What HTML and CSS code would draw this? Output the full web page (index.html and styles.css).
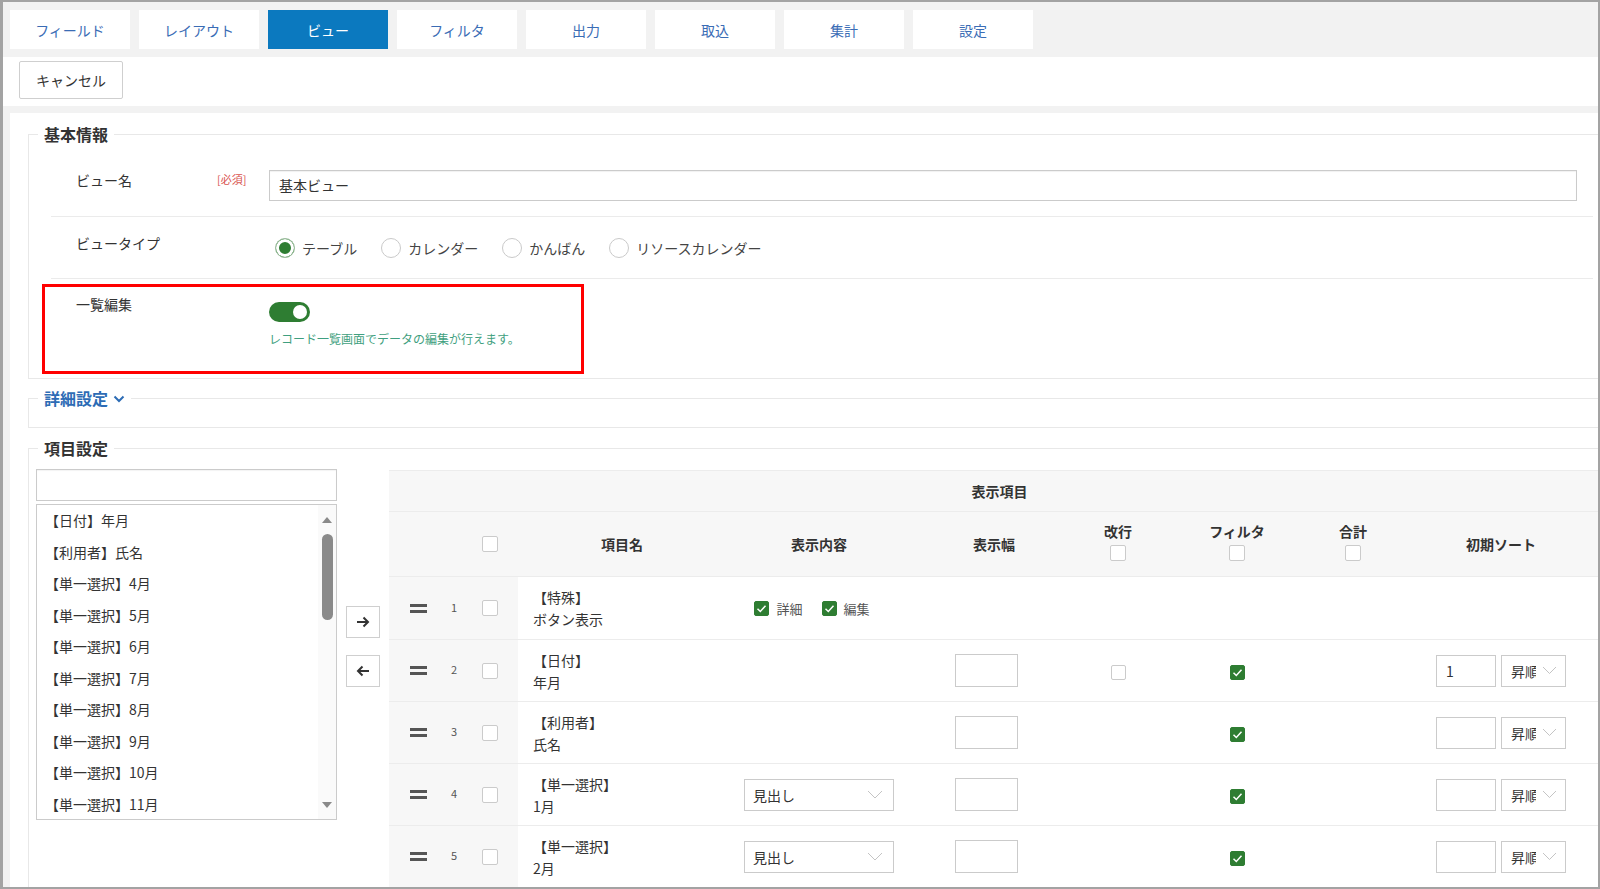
FILE: index.html
```html
<!DOCTYPE html>
<html lang="ja">
<head>
<meta charset="utf-8">
<title>ビュー設定</title>
<link rel="stylesheet" href="styles.css">
</head>
<body>
<div class="frame">
  <nav class="tabs">
    <a class="tab">フィールド</a>
    <a class="tab">レイアウト</a>
    <a class="tab active">ビュー</a>
    <a class="tab">フィルタ</a>
    <a class="tab">出力</a>
    <a class="tab">取込</a>
    <a class="tab">集計</a>
    <a class="tab">設定</a>
  </nav>
  <div class="toolbar"><button class="btn">キャンセル</button></div>
  <main class="panel">
    <fieldset class="fs fs-basic">
      <legend class="lg">基本情報</legend>
      <div class="frow frow-name">
        <div class="flabel">ビュー名</div>
        <div class="freq">[必須]</div>
        <div class="fctl"><div class="text-input">基本ビュー</div></div>
      </div>
      <div class="frow frow-type">
        <div class="flabel">ビュータイプ</div>
        <div class="freq"></div>
        <div class="fctl radios">
          <span class="radio"><span class="rdot on"></span>テーブル</span>
          <span class="radio"><span class="rdot"></span>カレンダー</span>
          <span class="radio"><span class="rdot"></span>かんばん</span>
          <span class="radio"><span class="rdot"></span>リソースカレンダー</span>
        </div>
      </div>
      <div class="frow frow-edit">
        <div class="flabel">一覧編集</div>
        <div class="freq"></div>
        <div class="fctl">
          <span class="toggle"><span class="knob"></span></span>
          <p class="help">レコード一覧画面でデータの編集が行えます。</p>
        </div>
        <div class="mark"></div>
      </div>
    </fieldset>

    <fieldset class="fs fs-detail">
      <legend class="lg lg-link">詳細設定<svg class="chev" width="12" height="8" viewBox="0 0 12 8"><path d="M1.5 1.5 6 6l4.5-4.5" fill="none" stroke="#2d6cb5" stroke-width="2"/></svg></legend>
    </fieldset>

    <fieldset class="fs fs-items">
      <legend class="lg">項目設定</legend>
      <div class="items-body">
        <div class="picker">
          <div class="search"></div>
          <div class="listbox">
            <ul class="list">
              <li>【日付】年月</li>
              <li>【利用者】氏名</li>
              <li>【単一選択】4月</li>
              <li>【単一選択】5月</li>
              <li>【単一選択】6月</li>
              <li>【単一選択】7月</li>
              <li>【単一選択】8月</li>
              <li>【単一選択】9月</li>
              <li>【単一選択】10月</li>
              <li>【単一選択】11月</li>
            </ul>
            <div class="sbar">
              <span class="tri-up"></span>
              <span class="thumb"></span>
              <span class="sbar-fill"></span>
              <span class="tri-down"></span>
            </div>
          </div>
        </div>
        <div class="movers">
          <button class="mv"><svg width="16" height="16" viewBox="0 0 16 16"><path d="M2 8h11M8.5 3.5 13 8l-4.5 4.5" fill="none" stroke="#333" stroke-width="2"/></svg></button>
          <button class="mv"><svg width="16" height="16" viewBox="0 0 16 16"><path d="M14 8H3M7.5 3.5 3 8l4.5 4.5" fill="none" stroke="#333" stroke-width="2"/></svg></button>
        </div>
        <table class="tbl">
          <colgroup>
            <col class="c-ctrl"><col class="c-name"><col class="c-disp"><col class="c-width"><col class="c-br"><col class="c-filter"><col class="c-sum"><col class="c-sort">
          </colgroup>
          <thead>
            <tr class="h1"><th colspan="8">表示項目</th></tr>
            <tr class="h2">
              <th><div class="ctrlbox"><span class="handle ghost"></span><span class="num"></span><span class="cb"></span></div></th>
              <th>項目名</th>
              <th>表示内容</th>
              <th>表示幅</th>
              <th><div class="stack">改行<span class="cb"></span></div></th>
              <th><div class="stack">フィルタ<span class="cb"></span></div></th>
              <th><div class="stack">合計<span class="cb"></span></div></th>
              <th>初期ソート</th>
            </tr>
          </thead>
          <tbody>
            <tr class="r1">
              <td class="ctrl"><div class="ctrlbox"><span class="handle"></span><span class="num">1</span><span class="cb"></span></div></td>
              <td class="name">【特殊】<br>ボタン表示</td>
              <td class="mid"><div class="opts"><span class="opt"><span class="cb sm on"><svg width="13" height="13" viewBox="0 0 13 13"><path d="M2.5 6.8 5.3 9.5 10.5 3.8" fill="none" stroke="#fff" stroke-width="1.5"/></svg></span>詳細</span><span class="opt"><span class="cb sm on"><svg width="13" height="13" viewBox="0 0 13 13"><path d="M2.5 6.8 5.3 9.5 10.5 3.8" fill="none" stroke="#fff" stroke-width="1.5"/></svg></span>編集</span></div></td>
              <td></td><td></td><td></td><td></td><td></td>
            </tr>
            <tr>
              <td class="ctrl"><div class="ctrlbox"><span class="handle"></span><span class="num">2</span><span class="cb"></span></div></td>
              <td class="name">【日付】<br>年月</td>
              <td></td>
              <td class="mid"><div class="winput"></div></td>
              <td class="mid"><span class="cb sm"></span></td>
              <td class="mid"><span class="cb sm on"><svg width="13" height="13" viewBox="0 0 13 13"><path d="M2.5 6.8 5.3 9.5 10.5 3.8" fill="none" stroke="#fff" stroke-width="1.5"/></svg></span></td>
              <td></td>
              <td class="mid"><div class="sortbox"><div class="sinput">1</div><div class="ssel"><span class="ssel-t">昇順</span><svg width="15" height="9" viewBox="0 0 15 9"><path d="M1 1l6.5 6.5L14 1" fill="none" stroke="#c4c4c4" stroke-width="1"/></svg></div></div></td>
            </tr>
            <tr>
              <td class="ctrl"><div class="ctrlbox"><span class="handle"></span><span class="num">3</span><span class="cb"></span></div></td>
              <td class="name">【利用者】<br>氏名</td>
              <td></td>
              <td class="mid"><div class="winput"></div></td>
              <td></td>
              <td class="mid"><span class="cb sm on"><svg width="13" height="13" viewBox="0 0 13 13"><path d="M2.5 6.8 5.3 9.5 10.5 3.8" fill="none" stroke="#fff" stroke-width="1.5"/></svg></span></td>
              <td></td>
              <td class="mid"><div class="sortbox"><div class="sinput"></div><div class="ssel"><span class="ssel-t">昇順</span><svg width="15" height="9" viewBox="0 0 15 9"><path d="M1 1l6.5 6.5L14 1" fill="none" stroke="#c4c4c4" stroke-width="1"/></svg></div></div></td>
            </tr>
            <tr>
              <td class="ctrl"><div class="ctrlbox"><span class="handle"></span><span class="num">4</span><span class="cb"></span></div></td>
              <td class="name">【単一選択】<br>1月</td>
              <td class="mid"><div class="dsel"><span>見出し</span><svg width="16" height="9" viewBox="0 0 16 9"><path d="M1 1l7 7 7-7" fill="none" stroke="#c4c4c4" stroke-width="1"/></svg></div></td>
              <td class="mid"><div class="winput"></div></td>
              <td></td>
              <td class="mid"><span class="cb sm on"><svg width="13" height="13" viewBox="0 0 13 13"><path d="M2.5 6.8 5.3 9.5 10.5 3.8" fill="none" stroke="#fff" stroke-width="1.5"/></svg></span></td>
              <td></td>
              <td class="mid"><div class="sortbox"><div class="sinput"></div><div class="ssel"><span class="ssel-t">昇順</span><svg width="15" height="9" viewBox="0 0 15 9"><path d="M1 1l6.5 6.5L14 1" fill="none" stroke="#c4c4c4" stroke-width="1"/></svg></div></div></td>
            </tr>
            <tr>
              <td class="ctrl"><div class="ctrlbox"><span class="handle"></span><span class="num">5</span><span class="cb"></span></div></td>
              <td class="name">【単一選択】<br>2月</td>
              <td class="mid"><div class="dsel"><span>見出し</span><svg width="16" height="9" viewBox="0 0 16 9"><path d="M1 1l7 7 7-7" fill="none" stroke="#c4c4c4" stroke-width="1"/></svg></div></td>
              <td class="mid"><div class="winput"></div></td>
              <td></td>
              <td class="mid"><span class="cb sm on"><svg width="13" height="13" viewBox="0 0 13 13"><path d="M2.5 6.8 5.3 9.5 10.5 3.8" fill="none" stroke="#fff" stroke-width="1.5"/></svg></span></td>
              <td></td>
              <td class="mid"><div class="sortbox"><div class="sinput"></div><div class="ssel"><span class="ssel-t">昇順</span><svg width="15" height="9" viewBox="0 0 15 9"><path d="M1 1l6.5 6.5L14 1" fill="none" stroke="#c4c4c4" stroke-width="1"/></svg></div></div></td>
            </tr>
          </tbody>
        </table>
      </div>
    </fieldset>
  </main>
</div>
</body>
</html>
```

FILE: styles.css
```css
* { box-sizing: border-box; }
html, body { margin: 0; padding: 0; }
body {
  font-family: "Noto Sans CJK JP", "Noto Sans", sans-serif;
  font-size: 14px;
  color: #333;
  background: #fff;
}

.frame {
  width: 1600px;
  height: 889px;
  border: 2px solid #a3a3a3;
  border-left-width: 3px;
  background: #f2f2f2;
  overflow: hidden;
  display: flex;
  flex-direction: column;
}

/* tabs */
.tabs {
  display: flex;
  gap: 9px;
  padding: 8px 0 8px 7px;
  flex: none;
}
.tab {
  width: 120px;
  height: 39px;
  background: #fff;
  color: #3a6cb5;
  display: flex;
  align-items: center;
  justify-content: center;
  font-size: 14px;
  line-height: 1;
}
.tab.active { background: #0b79bf; color: #fff; }

/* toolbar */
.toolbar {
  background: #fff;
  padding: 4px 0 7px 16px;
  flex: none;
}
.btn {
  width: 104px;
  height: 38px;
  border: 1px solid #cfcfcf;
  border-radius: 2px;
  background: #fff;
  color: #333;
  font-family: inherit;
  font-size: 14px;
  padding: 0;
}

/* panel */
.panel {
  flex: 1;
  background: #fff;
  margin: 7px 0 0 7px;
  padding: 11px 0 0 18px;
}
.fs {
  margin: 0 -6px 0 0;
  padding: 0 0 0 9px;
  border: 1px solid #e8e8e8;
  min-width: 0;
}
.lg {
  padding: 0 6px;
  font-size: 16px;
  font-weight: bold;
  line-height: 20px;
  color: #333;
}
.lg-link { color: #2d6cb5; display: flex; align-items: center; }
.chev { margin-left: 5px; margin-top: 2px; }

/* basic rows */
.frow {
  display: grid;
  grid-template-columns: 141px 52px 1fr;
  align-items: start;
  margin: 0 10px 0 13px;
  padding: 0 16px 0 25px;
  border-bottom: 1px solid #ebebeb;
}
.flabel { line-height: 20px; font-size: 14px; color: #333; }
.freq { line-height: 18px; font-size: 11px; color: #d9534f; }
.frow-name { padding-top: 26px; padding-bottom: 15px; }
.text-input {
  height: 31px;
  border: 1px solid #cbcbcb;
  box-shadow: inset 0 1px 1px rgba(0,0,0,0.06);
  padding: 0 9px;
  line-height: 29px;
  font-size: 14px;
  color: #333;
}
.frow-type { padding-top: 16px; padding-bottom: 20px; }
.radios {
  display: flex;
  gap: 24px;
  margin: 5px 0 0 6px;
}
.radio {
  display: flex;
  align-items: center;
  gap: 7px;
  height: 20px;
  line-height: 20px;
  font-size: 14px;
  color: #444;
}
.rdot {
  width: 20px;
  height: 20px;
  border-radius: 50%;
  border: 1px solid #cacaca;
  background: #fff;
  flex: none;
}
.rdot.on {
  border-color: #9fbfa1;
  background: #2e7d32;
  box-shadow: inset 0 0 0 3px #fff;
}
.frow-edit {
  position: relative;
  border-bottom: none;
  padding-top: 15px;
  padding-bottom: 30px;
}
.toggle {
  display: flex;
  justify-content: flex-end;
  align-items: center;
  width: 41px;
  height: 20px;
  margin-top: 8px;
  border-radius: 10px;
  background: #2e7d32;
  padding: 0 3px;
}
.knob { width: 14px; height: 14px; border-radius: 50%; background: #fff; }
.help {
  margin: 8px 0 0;
  line-height: 18px;
  font-size: 12px;
  color: #3f9f80;
}
.mark {
  position: absolute;
  left: -9px;
  top: 5px;
  width: 542px;
  height: 90px;
  border: 3px solid #ff0000;
}

/* detail */
.fs-detail { margin-top: 9px; padding-bottom: 19px; }

/* items */
.fs-items { margin-top: 10px; padding-top: 11px; }
.items-body {
  display: flex;
  align-items: flex-start;
  gap: 9px;
  margin-left: -2px;
}
.picker { width: 301px; flex: none; }
.search {
  height: 32px;
  border: 1px solid #cbcbcb;
  box-shadow: inset 0 1px 1px rgba(0,0,0,0.05);
}
.listbox {
  margin-top: 3px;
  height: 316px;
  border: 1px solid #cbcbcb;
  display: flex;
  overflow: hidden;
}
.list {
  list-style: none;
  margin: 0;
  padding: 0 0 0 8px;
  flex: 1;
}
.list li {
  height: 31.5px;
  line-height: 31.5px;
  font-size: 14px;
  color: #333;
  white-space: nowrap;
}
.sbar {
  width: 18px;
  flex: none;
  display: flex;
  flex-direction: column;
  align-items: center;
  padding: 12px 0 11px;
  background: #fafafa;
}
.tri-up {
  width: 0; height: 0;
  border-left: 5px solid transparent;
  border-right: 5px solid transparent;
  border-bottom: 6px solid #8a8a8a;
}
.tri-down {
  width: 0; height: 0;
  border-left: 5px solid transparent;
  border-right: 5px solid transparent;
  border-top: 6px solid #8a8a8a;
}
.thumb {
  width: 11px;
  height: 86px;
  margin-top: 11px;
  border-radius: 6px;
  background: #8a8a8a;
}
.sbar-fill { flex: 1; }

.movers {
  width: 34px;
  flex: none;
  display: flex;
  flex-direction: column;
  gap: 17px;
  padding-top: 137px;
}
.mv {
  width: 34px;
  height: 32px;
  padding: 0;
  border: 1px solid #cfcfcf;
  background: #fff;
  display: flex;
  align-items: center;
  justify-content: center;
}

/* table */
.tbl {
  flex: none;
  width: 1221px;
  margin-top: 1px;
  border-collapse: collapse;
  table-layout: fixed;
}
.c-ctrl { width: 129px; }
.c-name { width: 208px; }
.c-disp { width: 186px; }
.c-width { width: 164px; }
.c-br { width: 84px; }
.c-filter { width: 154px; }
.c-sum { width: 78px; }
.c-sort { width: 218px; }
.tbl th, .tbl td {
  padding: 0;
  border-bottom: 1px solid #ececec;
  vertical-align: middle;
}
.tbl thead th {
  background: #f7f7f7;
  font-weight: bold;
  font-size: 14px;
  color: #333;
  text-align: center;
}
.tbl .h1 th { height: 41px; border-top: 1px solid #ececec; }
.tbl .h2 th { height: 65px; }
.tbl tbody tr { height: 62px; }
.tbl tbody tr.r1 { height: 63px; }
.ctrl { background: #f7f7f7; }
.ctrlbox {
  display: flex;
  align-items: center;
  padding-left: 21px;
}
.handle {
  width: 17px;
  height: 9px;
  border-top: 3px solid #555;
  border-bottom: 3px solid #555;
  flex: none;
}
.handle.ghost { border-color: transparent; }
.num {
  width: 22px;
  margin: 0 17px 0 16px;
  text-align: center;
  font-size: 11px;
  color: #555;
  line-height: 16px;
  margin-top: -3px;
}
.cb {
  display: inline-flex;
  align-items: center;
  justify-content: center;
  width: 16px;
  height: 16px;
  border: 1px solid #cbcbcb;
  border-radius: 2px;
  background: #fff;
  flex: none;
  vertical-align: middle;
}
.cb.sm { width: 15px; height: 15px; }
.cb.on { background: #2e7d32; border-color: #2e7d32; }
.stack {
  display: flex;
  flex-direction: column;
  align-items: center;
  gap: 4px;
  line-height: 20px;
  margin-top: -7px;
}
.tbl td.name {
  padding-left: 15px;
  line-height: 22px;
  font-size: 14px;
  color: #333;
}
.mid { text-align: center; }
.opts {
  display: flex;
  justify-content: center;
  gap: 19px;
  margin-left: -14px;
}
.opt {
  display: flex;
  align-items: center;
  gap: 7px;
  font-size: 13px;
  color: #555;
}
.winput {
  display: inline-block;
  width: 63px;
  height: 33px;
  border: 1px solid #cbcbcb;
  background: #fff;
  vertical-align: middle;
  margin-right: 16px;
}
.dsel {
  display: flex;
  align-items: center;
  justify-content: space-between;
  width: 150px;
  height: 32px;
  margin: 0 auto;
  border: 1px solid #cbcbcb;
  background: #fff;
  padding: 0 10px 0 8px;
  font-size: 14px;
  color: #333;
}
.sortbox {
  display: flex;
  justify-content: center;
  gap: 5px;
}
.sinput {
  width: 60px;
  height: 32px;
  border: 1px solid #cbcbcb;
  background: #fff;
  text-align: left;
  padding-left: 9px;
  line-height: 30px;
  font-size: 14px;
  color: #333;
}
.ssel {
  width: 65px;
  height: 32px;
  border: 1px solid #cbcbcb;
  background: #fff;
  display: flex;
  align-items: center;
  padding: 0 7px 0 9px;
  gap: 6px;
}
.ssel-t {
  width: 25px;
  overflow: hidden;
  white-space: nowrap;
  font-size: 14px;
  color: #333;
  line-height: 30px;
}
```
